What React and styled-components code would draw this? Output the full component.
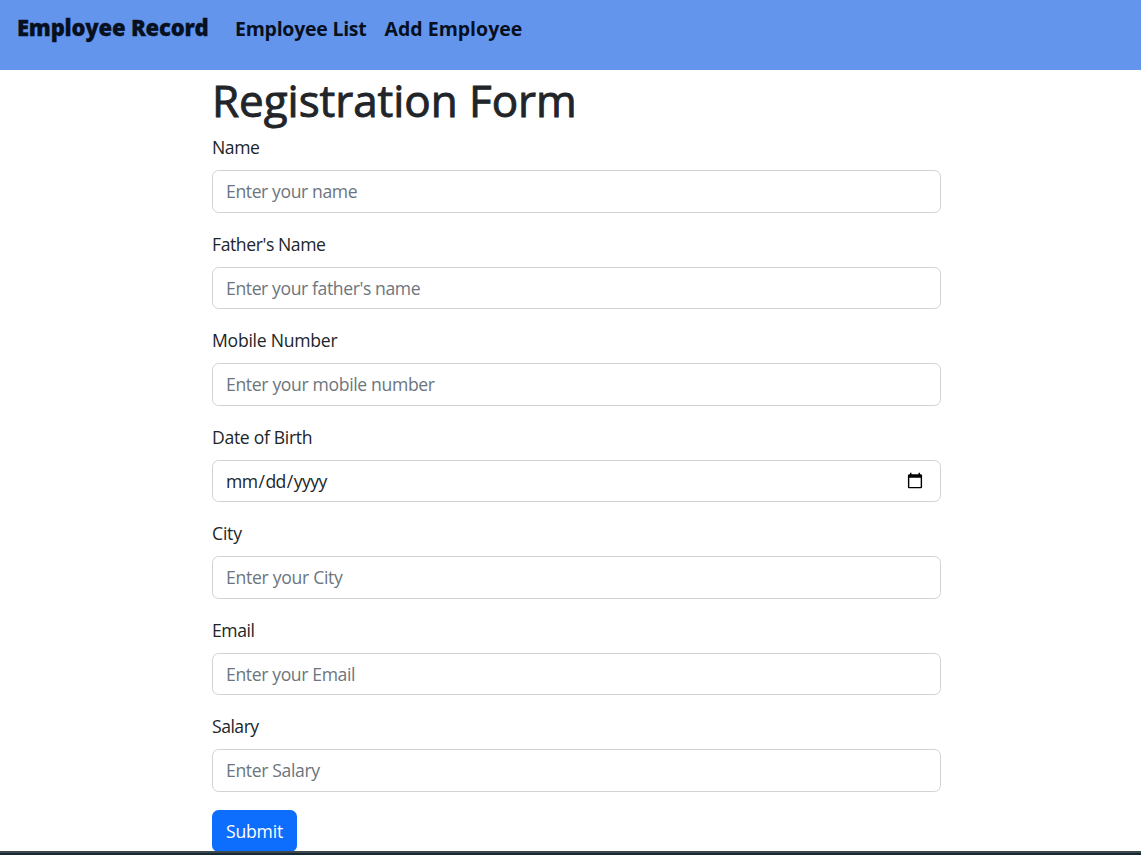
import React from "react";
import styled, { createGlobalStyle } from "styled-components";

const GlobalStyle = createGlobalStyle`
  *, *::before, *::after { box-sizing: border-box; }
  html, body { margin: 0; height: 100%; overflow: hidden; background: #fff; }
  body {
    color: #212529;
    font-family: "Open Sans", "Noto Sans", sans-serif;
    font-size: 17.6px;
  }
`;

const Page = styled.div`
  display: flex;
  flex-direction: column;
  height: 855px;
  overflow: hidden;
`;

const Navbar = styled.nav`
  display: flex;
  align-items: flex-start;
  height: 70px;
  padding: 9px 17px;
  background: #6495ed;
  flex: none;
`;

const Brand = styled.a`
  width: 218px;
  line-height: 37px;
  font-size: 22px;
  font-weight: 800;
  letter-spacing: ${(p) => p.$spacing}px;
  -webkit-text-stroke: 0.3px currentColor;
  color: #06101f;
  white-space: nowrap;
`;

const NavLink = styled.a`
  margin-right: 18px;
  line-height: 40px;
  font-size: 19.5px;
  font-weight: 700;
  letter-spacing: ${(p) => p.$spacing}px;
  color: #06101f;
  white-space: nowrap;
`;

const Form = styled.form`
  display: flex;
  flex-direction: column;
  align-items: flex-start;
  flex: 1;
  min-height: 0;
  width: 729px;
  margin-left: 212px;
`;

const Title = styled.h1`
  flex: none;
  margin: 4px 0 7px;
  height: 53px;
  line-height: 53px;
  font-size: 44px;
  font-weight: 500;
  letter-spacing: -0.05px;
  -webkit-text-stroke: 0.9px currentColor;
  white-space: nowrap;
`;

const Field = styled.div`
  display: flex;
  flex-direction: column;
  gap: 9px;
  width: 100%;
  height: 78.5px;
  margin-bottom: 18px;
  flex: none;
`;

const Label = styled.label`
  height: 27px;
  line-height: 27px;
  letter-spacing: ${(p) => p.$spacing}px;
`;

const Input = styled.input`
  width: 100%;
  height: 42.5px;
  padding: 0 13px;
  border: 1px solid #d0d3d6;
  border-radius: 6.6px;
  background: #fff;
  color: #212529;
  font: inherit;
  letter-spacing: ${(p) => p.$spacing}px;
  outline: none;
  &::placeholder { color: #6c757d; opacity: 1; }
  &[type="date"] { padding: 0 14px 0 12px; }
`;

const Submit = styled.button`
  flex: none;
  width: 85px;
  height: 42px;
  padding: 0;
  border: 0;
  border-radius: 6.6px;
  background: #0d6efd;
  color: #fff;
  font: inherit;
  line-height: 42px;
  letter-spacing: -0.2px;
`;

const Taskbar = styled.footer`
  flex: none;
  height: 4px;
  border-top: 2px solid #3c484b;
  background: #172a31;
  position: relative;
`;

const fields = [
  { id: "name", label: "Name", hint: "Enter your name", ls: -0.4, hs: -0.4 },
  { id: "father", label: "Father's Name", hint: "Enter your father's name", ls: -0.42, hs: -0.4 },
  { id: "mobile", label: "Mobile Number", hint: "Enter your mobile number", ls: -0.25, hs: -0.35 },
  { id: "dob", label: "Date of Birth", type: "date", ls: -0.32, hs: -0.55 },
  { id: "city", label: "City", hint: "Enter your City", ls: -0.2, hs: -0.3 },
  { id: "email", label: "Email", hint: "Enter your Email", ls: -0.45, hs: -0.38 },
  { id: "salary", label: "Salary", hint: "Enter Salary", ls: -0.5, hs: -0.37 },
];

export default function App() {
  return (
    <>
      <GlobalStyle />
      <Page>
        <Navbar>
          <Brand $spacing={-0.2}>Employee Record</Brand>
          <NavLink $spacing={-0.25}>Employee List</NavLink>
          <NavLink $spacing={0}>Add Employee</NavLink>
        </Navbar>
        <Form>
          <Title>Registration Form</Title>
          {fields.map((f) => (
            <Field key={f.id}>
              <Label htmlFor={f.id} $spacing={f.ls}>{f.label}</Label>
              <Input id={f.id} type={f.type || "text"} placeholder={f.hint} $spacing={f.hs} />
            </Field>
          ))}
          <Submit type="button">Submit</Submit>
        </Form>
        <Taskbar />
      </Page>
    </>
  );
}
